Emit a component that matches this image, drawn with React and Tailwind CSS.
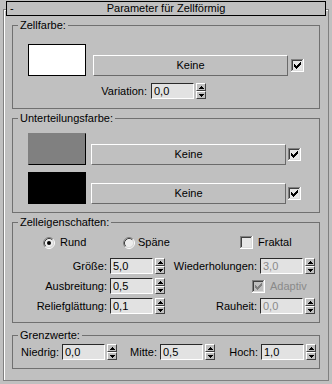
import React from 'react';

// Sunken 13x13 checkbox in the classic style
const Check = ({ checked = true, disabled = false, className = '' }) => {
  const ink = disabled ? '#808080' : '#000000';
  const cols = [
    [3, 5], [4, 6], [5, 7], [6, 6], [7, 5], [8, 4], [9, 3],
  ];
  return (
    <svg width="13" height="13" viewBox="0 0 13 13" className={`shrink-0 ${className}`} shapeRendering="crispEdges">
      <rect x="0" y="0" width="13" height="13" fill="#ffffff" />
      <rect x="0" y="0" width="12" height="12" fill="#808080" />
      <rect x="1" y="1" width="11" height="11" fill="#dcdcdc" />
      <rect x="1" y="1" width="10" height="10" fill="#404040" />
      <rect x="2" y="2" width="9" height="9" fill={disabled ? '#c0c0c0' : '#e6e6e6'} />
      {checked && cols.map(([x, y]) => <rect key={x} x={x} y={y} width="1" height="3" fill={ink} />)}
    </svg>
  );
};

const Radio = ({ checked = false }) => (
  <svg width="12" height="12" viewBox="0 0 12 12" className="shrink-0">
    <circle cx="6" cy="6" r="4.5" fill="#ececec" />
    <path d="M2.11 9.89 A5.5 5.5 0 0 1 9.89 2.11" fill="none" stroke="#808080" />
    <path d="M9.89 2.11 A5.5 5.5 0 0 1 2.11 9.89" fill="none" stroke="#ffffff" />
    <path d="M2.82 9.18 A4.5 4.5 0 0 1 9.18 2.82" fill="none" stroke="#404040" />
    <path d="M9.18 2.82 A4.5 4.5 0 0 1 2.82 9.18" fill="none" stroke="#d8d8d8" />
    {checked && <circle cx="6" cy="6" r="2" fill="#000000" />}
  </svg>
);

const Arrow = ({ down = false }) => (
  <svg width="5" height="3" viewBox="0 0 5 3" shapeRendering="crispEdges">
    {down ? (
      <>
        <rect x="0" y="0" width="5" height="1" />
        <rect x="1" y="1" width="3" height="1" />
        <rect x="2" y="2" width="1" height="1" />
      </>
    ) : (
      <>
        <rect x="2" y="0" width="1" height="1" />
        <rect x="1" y="1" width="3" height="1" />
        <rect x="0" y="2" width="5" height="1" />
      </>
    )}
  </svg>
);

const SpinField = ({ value, disabled = false, className = '' }) => (
  <div className={`flex shrink-0 ${className}`}>
    <div
      className={`h-[16px] w-[43px] border border-t-[#2a2a2a] border-l-[#2a2a2a] border-r-white border-b-white bg-[#e2e2e2] pl-[2px] leading-[14px] ${
        disabled ? 'text-[#8a8a8a]' : 'text-black'
      }`}
    >
      {value}
    </div>
    <div className="ml-[2px] flex h-[16px] w-[10px] flex-col">
      <div className="flex h-[8px] items-center justify-center border border-t-white border-l-white border-r-[#404040] border-b-[#404040]">
        <Arrow />
      </div>
      <div className="flex h-[8px] items-center justify-center border border-t-white border-l-white border-r-[#404040] border-b-[#404040]">
        <Arrow down />
      </div>
    </div>
  </div>
);

const Button = ({ className = '' }) => (
  <div
    className={`flex h-[21px] w-[195px] shrink-0 items-center justify-center border border-t-white border-l-white border-r-[#6a6a6a] border-b-[#6a6a6a] ${className}`}
  >
    Keine
  </div>
);

const Group = ({ label, className = '', children }) => (
  <fieldset className={`ml-[8px] w-[308px] border border-[#707070] ${className}`}>
    <legend className="ml-[5px] px-[2px] leading-[12px]">{label}</legend>
    {children}
  </fieldset>
);

export default function App() {
  return (
    <div className="h-[384px] w-[332px] overflow-hidden bg-[#c0c0c0] pt-[1px] font-['Liberation_Sans',Arial,sans-serif] text-[11px] text-black">
      {/* Rollout title */}
      <div className="relative z-10 mx-[6px] grid h-[15px] grid-cols-[20px_1fr_20px] items-center border border-black bg-[#c0c0c0] leading-[13px]">
        <span className="pl-[3px]">-</span>
        <span className="text-center">Parameter für Zellförmig</span>
        <span />
      </div>

      <div className="-mt-[7px] ml-[3px] h-[372px] w-[326px] border border-[#808080] shadow-[inset_1px_1px_0_#ffffff]">
        {/* Zellfarbe */}
        <Group label="Zellfarbe:" className="mt-[9px] pb-[9px]">
          <div className="mt-[13px] flex items-end">
            <div className="ml-[15px] h-[32px] w-[58px] shrink-0 border border-black bg-white" />
            <Button className="ml-[7px]" />
            <Check className="mb-[4px] ml-[3px]" />
          </div>
          <div className="mt-[7px] flex h-[16px] items-center">
            <span className="w-[134px] text-right">Variation:</span>
            <SpinField value="0,0" className="ml-[4px]" />
          </div>
        </Group>

        {/* Unterteilungsfarbe */}
        <Group label="Unterteilungsfarbe:" className="mt-[3px] pb-[8px]">
          <div className="mt-[9px] flex items-end">
            <div className="ml-[15px] h-[32px] w-[58px] shrink-0 border border-[#808080] border-r-black border-b-black bg-[#808080]" />
            <Button className="ml-[5px]" />
            <Check className="mb-[4px] ml-[2px]" />
          </div>
          <div className="mt-[7px] flex items-end">
            <div className="ml-[15px] h-[32px] w-[58px] shrink-0 border border-black bg-black" />
            <Button className="ml-[5px]" />
            <Check className="mb-[4px] ml-[2px]" />
          </div>
        </Group>

        {/* Zelleigenschaften */}
        <Group label="Zelleigenschaften:" className="mt-[3px] pb-[8px]">
          <div className="mt-[8px] flex h-[13px] items-center">
            <div className="ml-[30px] flex w-[80px] items-center">
              <Radio checked />
              <span className="ml-[5px]">Rund</span>
            </div>
            <div className="flex w-[117px] items-center">
              <Radio />
              <span className="ml-[3px]">Späne</span>
            </div>
            <div className="flex items-center">
              <Check checked={false} />
              <span className="ml-[5px]">Fraktal</span>
            </div>
          </div>

          <div className="mt-[9px] flex h-[16px] items-center">
            <span className="w-[94px] shrink-0 text-right">Größe:</span>
            <SpinField value="5,0" className="ml-[3px]" />
            <span className="w-[92px] shrink-0 text-right">Wiederholungen:</span>
            <SpinField value="3,0" disabled className="ml-[3px]" />
          </div>

          <div className="mt-[4px] flex h-[16px] items-center">
            <span className="w-[94px] shrink-0 text-right">Ausbreitung:</span>
            <SpinField value="0,5" className="ml-[3px]" />
            <Check disabled className="ml-[87px]" />
            <span className="ml-[5px] text-[#8a8a8a]">Adaptiv</span>
          </div>

          <div className="mt-[4px] flex h-[16px] items-center">
            <span className="w-[94px] shrink-0 text-right">Reliefglättung:</span>
            <SpinField value="0,1" className="ml-[3px]" />
            <span className="w-[92px] shrink-0 text-right">Rauheit:</span>
            <SpinField value="0,0" disabled className="ml-[3px]" />
          </div>
        </Group>

        {/* Grenzwerte */}
        <Group label="Grenzwerte:" className="mt-[6px] pb-[8px]">
          <div className="mt-[3px] flex h-[16px] items-center">
            <span className="w-[46px] shrink-0 text-right">Niedrig:</span>
            <SpinField value="0,0" className="ml-[3px]" />
            <span className="w-[40px] shrink-0 text-right">Mitte:</span>
            <SpinField value="0,5" className="ml-[3px]" />
            <span className="w-[43px] shrink-0 text-right">Hoch:</span>
            <SpinField value="1,0" className="ml-[3px]" />
          </div>
        </Group>
      </div>
    </div>
  );
}
